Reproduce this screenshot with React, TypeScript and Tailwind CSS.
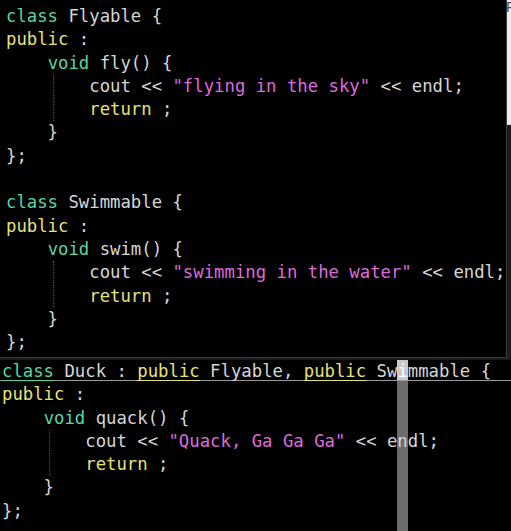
import React from "react"

type Tok = [string, string]

const G = "text-[#58d6a6]"
const Y = "text-[#e6e276]"
const P = "text-[#de6ade]"
const W = "text-[#d6d6d6]"

// a line: indent guide flag + tokens
type Line = { guide?: boolean; toks: Tok[] }

const topLines: Line[] = [
  { toks: [["class", G], [" Flyable {", W]] },
  { toks: [["public", Y], [" :", W]] },
  { toks: [["    ", W], ["void", G], [" fly() {", W]] },
  { guide: true, toks: [["   cout << ", W], ['"flying in the sky"', P], [" << endl;", W]] },
  { guide: true, toks: [["   ", W], ["return", Y], [" ;", W]] },
  { toks: [["    }", W]] },
  { toks: [["};", W]] },
  { toks: [[" ", W]] },
  { toks: [["class", G], [" Swimmable {", W]] },
  { toks: [["public", Y], [" :", W]] },
  { toks: [["    ", W], ["void", G], [" swim() {", W]] },
  { guide: true, toks: [["   cout << ", W], ['"swimming in the water"', P], [" << endl;", W]] },
  { guide: true, toks: [["   ", W], ["return", Y], [" ;", W]] },
  { toks: [["    }", W]] },
  { toks: [["};", W]] },
]

const bottomLines: Line[] = [
  { toks: [["public", Y], [" :", W]] },
  { toks: [["    ", W], ["void", G], [" quack() {", W]] },
  { guide: true, toks: [["   cout << ", W], ['"Quack, Ga Ga Ga"', P], [" << endl;", W]] },
  { guide: true, toks: [["   ", W], ["return", Y], [" ;", W]] },
  { toks: [["    }", W]] },
  { toks: [["};", W]] },
]

function CodeLine({ line }: { line: Line }) {
  return (
    <div className="whitespace-pre h-[23.3px]">
      {line.guide && (
        <>
          <span>{"    "}</span>
          <span className="inline-block w-[1ch] h-[23.3px] align-top border-l border-dotted border-[#5a5a5a] translate-x-[0.5ch]" />
        </>
      )}
      {line.toks.map(([t, c], i) => (
        <span key={i} className={c}>
          {t}
        </span>
      ))}
    </div>
  )
}

export default function App() {
  return (
    <div
      className="w-[511px] h-[531px] overflow-hidden bg-black flex flex-col text-[17.3px] leading-[23.3px]"
      style={{ fontFamily: '"DejaVu Sans Mono", "Liberation Mono", monospace' }}
    >
      <div className="flex h-[358px] shrink-0">
        <div className="flex-1 bg-black border-r border-b border-[#3c3c3c] pl-[6px] pt-[5px]">
          {topLines.map((l, i) => (
            <CodeLine key={i} line={l} />
          ))}
        </div>
        <div className="w-[4px] flex flex-col overflow-hidden">
          <div className="h-[125px] bg-[#ececec] border-b border-[#d8d8d8] relative">
            <span className="absolute left-[-1px] top-[-4px] text-[14px] text-[#444]" style={{ fontFamily: '"Liberation Sans", sans-serif' }}>
              F
            </span>
          </div>
          <div className="flex-1 bg-[#1c1c1c]" />
        </div>
      </div>
      <div className="h-[2px] bg-[#1a1a1a] shrink-0" />
      <div className="relative flex-1 pl-[2px]">
        <span className="absolute top-0 left-[calc(2px+38ch)] w-[1ch] h-[21px] bg-[#c9c9c9]" />
        <span className="absolute top-[21px] bottom-0 left-[calc(2px+38ch)] w-[1ch] bg-[#6c6c6c]" />
        <div className="relative flex h-[21px] mb-[2.3px] whitespace-pre shadow-[inset_0_-1px_0_#9a9a9a] -ml-[2px] pl-[2px]">
          <span className={`${G} shadow-[inset_0_-1px_0_#58d6a6]`}>class</span>
          <span className={W}>{" Duck : "}</span>
          <span className={`${Y} shadow-[inset_0_-1px_0_#e6e276]`}>public</span>
          <span className={W}>{" Flyable, "}</span>
          <span className={`${Y} shadow-[inset_0_-1px_0_#e6e276]`}>public</span>
          <span className={W}>{" Sw"}</span>
          <span className="text-white">i</span>
          <span className={W}>{"mmable {"}</span>
        </div>
        <div className="relative">
          {bottomLines.map((l, i) => (
            <CodeLine key={i} line={l} />
          ))}
        </div>
      </div>
    </div>
  )
}
